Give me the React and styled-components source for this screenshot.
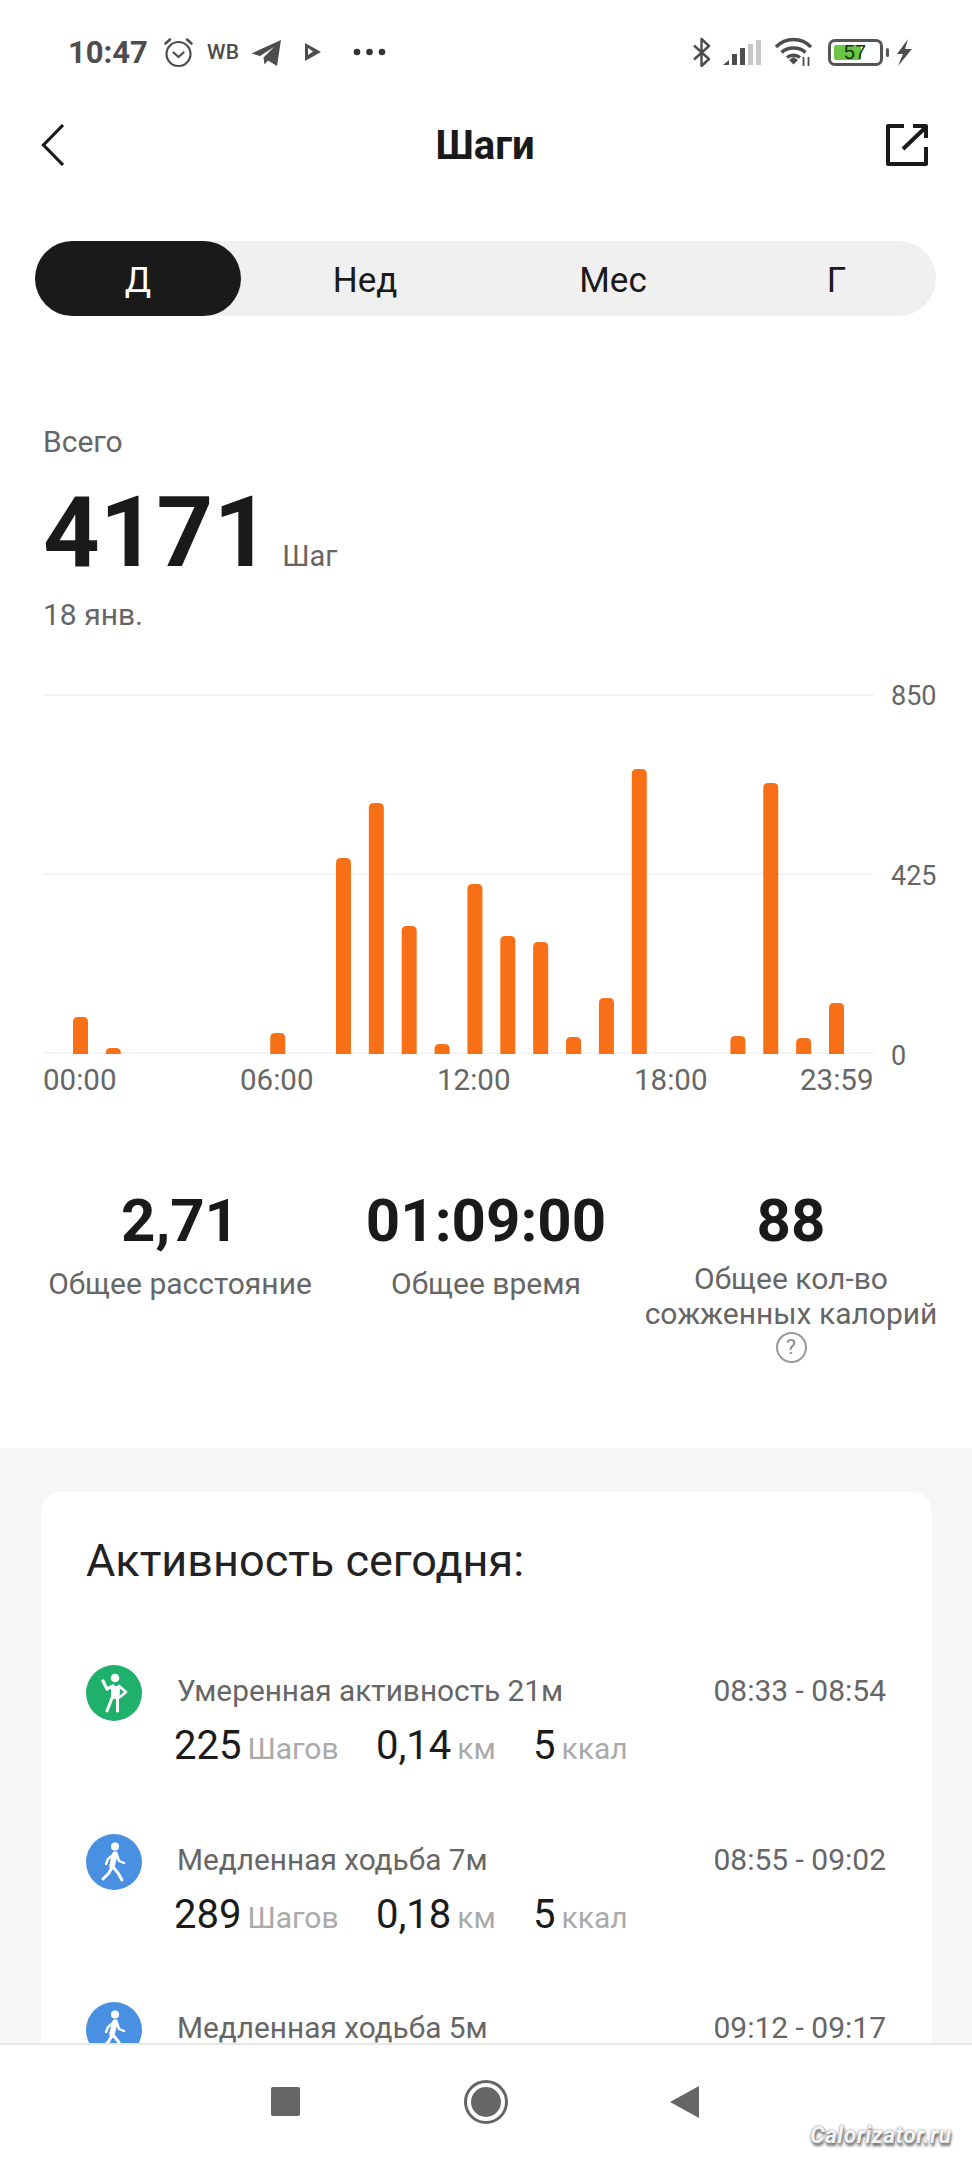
import React from "react";
import styled, { createGlobalStyle } from "styled-components";

const Global = createGlobalStyle`
  html, body { margin: 0; padding: 0; background: #fff; }
  * { box-sizing: border-box; }
  body { font-family: Roboto, "Noto Sans", sans-serif; color: #1a1a1a; }
`;
const Page = styled.div`
  position: relative; width: 972px; height: 2160px; display: flex; flex-direction: column;
  overflow: hidden; background: #fff;
`;
const Status = styled.div`
  height: 104px; flex: none; display: flex; align-items: center; justify-content: space-between;
  padding: 0 60px 0 68px; color: #4d4d4d;
`;
const StatusGroup = styled.div`display: flex; align-items: center;`;
const Time = styled.span`font-size: 31px; font-weight: 700; line-height: 1;`;
const StatusItem = styled.span`display: flex; align-items: center; margin-left: ${p => p.$gap}px;`;
const Wb = styled.span`font-size: 21px; font-weight: 500; letter-spacing: .3px;`;
const Battery = styled.span`
  position: relative; width: 55px; height: 27px; border: 3px solid #555; border-radius: 7px; display: block; margin-right: 12px;
  &::after { content: ""; position: absolute; right: -9px; top: 6px; width: 3px; height: 9px; background: #555; border-radius: 2px; }
`;
const BatteryFill = styled.span`position: absolute; left: 3px; top: 3px; bottom: 3px; border-radius: 2px; background: #6cc644;`;
const BatteryText = styled.span`
  position: absolute; left: 13px; top: 0; line-height: 21px; font-family: "Liberation Sans", sans-serif; font-size: 20px; color: #16331a;
`;
const Header = styled.div`height: 82px; flex: none; display: grid; grid-template-columns: 1fr auto 1fr; align-items: center; padding: 0 43px 0 41px;`;
const IconBtn = styled.span`display: flex; justify-content: ${p => p.$end ? "flex-end" : "flex-start"};`;
const Title = styled.h1`margin: 2px 0 0; font-size: 40px; font-weight: 700; line-height: 1;`;
const Segmented = styled.div`
  margin: 55px 36px 0 35px; height: 75px; flex: none; background: #f0f0f0; border-radius: 38px;
  display: grid; grid-template-columns: 206px 248px 248px 199px;
`;
const Segment = styled.div`
  display: flex; align-items: center; justify-content: center; font-size: 35px; padding-top: 3px;
  border-radius: 38px;
  color: ${p => p.$active ? "#fff" : "#1a1a1a"}; background: ${p => p.$active ? "#1a1a1a" : "transparent"};
`;
const Summary = styled.div`padding: 108px 0 0 43px; flex: none;`;
const Muted = styled.div`font-size: 30px; line-height: 36px; color: #666;`;
const TotalRow = styled.div`display: flex; align-items: baseline; margin: 22px 0 15px;`;
const Total = styled.span`font-size: 99px; font-weight: 700; line-height: 100px;`;
const TotalUnit = styled.span`margin-left: 12px; font-size: 29px; color: #666;`;
const Chart = styled.div`margin: 61px 0 0 43px; flex: none; display: grid; grid-template-columns: 831px auto; column-gap: 17px;`;
const Plot = styled.svg`display: block; width: 831px; height: 360px;`;
const YAxis = styled.div`
  height: 396px; margin: -16px 0 -20px; display: flex; flex-direction: column; justify-content: space-between;
  font-size: 27px; line-height: 36px; color: #666;
`;
const XAxis = styled.div`
  margin-top: 8px; display: grid; grid-template-columns: 197px 197px 197px 166px 74px;
  font-size: 29.5px; line-height: 36px; color: #666; white-space: nowrap;
`;
const Stats = styled.div`
  margin-top: 88px; padding-left: 33px; flex: none; display: grid; grid-template-columns: 294px 318px 292px; text-align: center; height: 262px;
`;
const Stat = styled.div`display: flex; flex-direction: column; align-items: center;`;
const StatValue = styled.div`font-size: 60px; font-weight: 700; line-height: 70px;`;
const StatLabel = styled.div`margin-top: ${p => p.$top}px; font-size: 30px; line-height: 35px; color: #666; white-space: nowrap;`;
const Help = styled.span`
  width: 31px; height: 31px; margin-top: 1px; border: 2.5px solid #999; border-radius: 50%; display: flex; align-items: center; justify-content: center;
  font-size: 21px; line-height: 1; color: #888;
`;
const Lower = styled.div`flex: 1; min-height: 0; background: #f6f6f6; padding: 44px 40px 0 41px; overflow: hidden;`;
const Card = styled.div`background: #fff; border-radius: 20px 20px 0 0; padding: 39px 46px 0 45px; height: 700px;`;
const CardTitle = styled.div`font-size: 45px; line-height: 60px; margin-bottom: 74px; color: #222;`;
const Row = styled.div`height: 168.5px; display: grid; grid-template-columns: 91px 1fr auto; grid-template-rows: 36px auto; align-content: start;`;
const Badge = styled.svg`width: 56px; height: 56px; grid-row: 1 / span 2; display: block;`;
const RowTitle = styled.div`margin-top: 12px; font-size: 29.8px; line-height: 28px; color: #666; white-space: nowrap;`;
const RowTime = styled.div`margin-top: 12px; font-size: 30px; line-height: 28px; color: #666; white-space: nowrap;`;
const Metrics = styled.div`grid-column: 2 / span 2; margin: 21px 0 0 -3px; display: grid; grid-template-columns: 202px 157px auto;`;
const Metric = styled.div`display: flex; align-items: baseline; gap: 6px; white-space: nowrap;`;
const MetricValue = styled.span`font-size: 40px; line-height: 48px; color: #1a1a1a;`;
const MetricUnit = styled.span`font-size: 30px; color: #aaa;`;
const BottomNav = styled.div`
  flex: none; height: 117px; background: #fff; border-top: 2px solid #e8e8e8; padding: 0 3px 2px 0; display: flex; align-items: center; justify-content: center; gap: 164px;
`;
const Square = styled.span`width: 29px; height: 29px; background: #666; border-radius: 2px;`;
const Home = styled.span`
  width: 44px; height: 44px; border: 3px solid #666; border-radius: 50%; padding: 4px; display: block;
  &::after { content: ""; display: block; width: 100%; height: 100%; background: #666; border-radius: 50%; }
`;
const BackTriangle = styled.svg`width: 29px; height: 32px; margin-left: -2px; display: block;`;
const Watermark = styled.div`
  position: absolute; left: 810px; top: 2122px; font-size: 23px; font-weight: 700; font-style: italic; letter-spacing: .4px; line-height: 28px;
  color: #f4f4f4; text-shadow: 0 0 2px #666, 1px 3px 3px #666;
`;

const hours = { 0: 37, 1: 6, 6: 21, 8: 196, 9: 251, 10: 128, 11: 10, 12: 170, 13: 118, 14: 112, 15: 17, 16: 56, 17: 285, 20: 18, 21: 271, 22: 16, 23: 51 };

const Person = ({ kind }) => kind === "green" ? (
  <Badge viewBox="0 0 56 56">
    <circle cx="28" cy="28" r="28" fill="#1fb16c" />
    <circle cx="29" cy="13" r="4.3" fill="#fff" />
    <g fill="none" stroke="#fff" strokeLinecap="round" strokeLinejoin="round">
      <polyline points="17,16 21,24 27,21" strokeWidth="3.2" />
      <polyline points="33,21 40,27 34,32" strokeWidth="2.8" />
      <path d="M26 22 L33 22 L32.5 33 L26 33 Z" fill="#fff" strokeWidth="2" />
      <path d="M26 33 L21 46 M31.5 33 L31.5 46" strokeWidth="3" />
    </g>
  </Badge>
) : (
  <Badge viewBox="0 0 56 56">
    <circle cx="28" cy="28" r="28" fill="#4a90e2" />
    <circle cx="29" cy="12.5" r="4" fill="#fff" />
    <g fill="none" stroke="#fff" strokeLinecap="round" strokeLinejoin="round">
      <path d="M29 20 L26 32" strokeWidth="5.5" />
      <path d="M27 21 L22 25 L20 30 M31 21 L33 27 L38 29" strokeWidth="2.4" />
      <path d="M26 33 L23 39 L17 45 M27 33 L32 39 L36 46" strokeWidth="3" />
    </g>
  </Badge>
);

const activities = [
  { kind: "green", title: "Умеренная активность 21м", time: "08:33 - 08:54", steps: "225", km: "0,14", kcal: "5" },
  { kind: "blue", title: "Медленная ходьба 7м", time: "08:55 - 09:02", steps: "289", km: "0,18", kcal: "5" },
  { kind: "blue", title: "Медленная ходьба 5м", time: "09:12 - 09:17" },
];

export default function App() {
  return (
    <Page>
      <Global />
      <Status>
        <StatusGroup>
          <Time>10:47</Time>
          <StatusItem $gap={15}>
            <svg width="31" height="31" viewBox="0 0 31 31" fill="none" stroke="#4d4d4d" strokeWidth="2.2" strokeLinecap="round" strokeLinejoin="round">
              <circle cx="15.5" cy="17" r="12" />
              <path d="M10.5 15.5 L15.5 20 L20.5 15.5" />
              <path d="M2.5 6.5 L7 2.5 M28.5 6.5 L24 2.5" strokeWidth="2.6" />
            </svg>
          </StatusItem>
          <StatusItem $gap={13}><Wb>WB</Wb></StatusItem>
          <StatusItem $gap={12}>
            <svg width="31" height="27" viewBox="0 0 31 27"><path fill="#4d4d4d" d="M0.5 14.5 L30 1 L26 27 L17 21.5 L13.5 25.5 L12.5 18.5 L23 8 L9 17 Z" /></svg>
          </StatusItem>
          <StatusItem $gap={23}>
            <svg width="16" height="18" viewBox="0 0 16 18"><path fill="#4d4d4d" d="M0 0 L16 9 L0 18 Z" /><path fill="#fff" d="M3 5 L8 8.5 L3 12 Z" /></svg>
          </StatusItem>
          <StatusItem $gap={32}>
            <svg width="33" height="8" viewBox="0 0 33 8" fill="#333"><circle cx="4" cy="4" r="3.3" /><circle cx="16.5" cy="4" r="3.3" /><circle cx="29" cy="4" r="3.3" /></svg>
          </StatusItem>
        </StatusGroup>
        <StatusGroup>
          <svg width="20" height="31" viewBox="0 0 20 31" fill="none" stroke="#4d4d4d" strokeWidth="2.4" strokeLinejoin="round"><path d="M2 8.5 L17 22 L9.5 29 L9.5 2 L17 9 L2 22.5" /></svg>
          <StatusItem $gap={11}>
            <svg width="38" height="27" viewBox="0 0 38 27">
              <path fill="#4d4d4d" d="M0 26 L6 21 L6 26 Z" />
              <rect x="9" y="15" width="5" height="11" fill="#4d4d4d" />
              <rect x="17" y="9" width="5" height="17" fill="#4d4d4d" />
              <rect x="25" y="5" width="5" height="21" fill="#c8c8c8" />
              <rect x="33" y="1" width="5" height="25" fill="#c8c8c8" />
            </svg>
          </StatusItem>
          <StatusItem $gap={13}>
            <svg width="39" height="30" viewBox="0 0 38 30" fill="none" stroke="#4d4d4d" strokeWidth="3.4">
              <path d="M1.5 10 C11 0 27 0 36.5 10" />
              <path d="M7 15.5 C13 9.5 25 9.5 31 15.5" />
              <path d="M12.5 20.5 C16 17.5 22 17.5 25.5 20.5" />
              <path d="M14.5 23 L19 27.5 L23.5 23 L19 20 Z" fill="#4d4d4d" stroke="none" />
              <path d="M29 20 V29 M34 20 V29" strokeWidth="1.8" />
            </svg>
          </StatusItem>
          <StatusItem $gap={15}>
            <Battery>
              <BatteryFill style={{ width: "27px" }} />
              <BatteryText>57</BatteryText>
            </Battery>
          </StatusItem>
          <svg width="17" height="27" viewBox="0 0 17 27"><path fill="#4d4d4d" d="M13 0 L2 15 L8 15 L3 27 L17 10 L10 10 Z" /></svg>
        </StatusGroup>
      </Status>
      <Header>
        <IconBtn>
          <svg width="24" height="44" viewBox="0 0 24 44" fill="none" stroke="#1a1a1a" strokeWidth="3.2"><path d="M22 2 L2.5 22 L22 42" /></svg>
        </IconBtn>
        <Title>Шаги</Title>
        <IconBtn $end>
          <svg width="44" height="44" viewBox="0 0 44 44" fill="none" stroke="#1a1a1a" strokeWidth="4" strokeLinejoin="round">
            <path d="M19 3 H3 V41 H41 V24" />
            <path d="M18 26 L41 4 M28 3 H41 V15" />
          </svg>
        </IconBtn>
      </Header>
      <Segmented>
        <Segment $active>Д</Segment>
        <Segment>Нед</Segment>
        <Segment>Мес</Segment>
        <Segment>Г</Segment>
      </Segmented>
      <Summary>
        <Muted>Всего</Muted>
        <TotalRow><Total>4171</Total><TotalUnit>Шаг</TotalUnit></TotalRow>
        <Muted>18 янв.</Muted>
      </Summary>
      <Chart>
        <Plot viewBox="0 0 831 360">
          {[1, 180, 360 - 1].map(y => <rect key={y} x="0" y={y - 1} width="831" height="2" fill="#f5f5f5" />)}
          {Object.entries(hours).map(([h, v]) => (
            <path key={h} fill="#f76f16" d={`M${30 + h * 32.87} 360 V${360 - v + 5} q0 -5 5 -5 h5 q5 0 5 5 V360 Z`} />
          ))}
        </Plot>
        <YAxis><span>850</span><span>425</span><span>0</span></YAxis>
        <XAxis><span>00:00</span><span>06:00</span><span>12:00</span><span>18:00</span><span>23:59</span></XAxis>
      </Chart>
      <Stats>
        <Stat><StatValue>2,71</StatValue><StatLabel $top={10}>Общее расстояние</StatLabel></Stat>
        <Stat><StatValue>01:09:00</StatValue><StatLabel $top={10}>Общее время</StatLabel></Stat>
        <Stat><StatValue>88</StatValue><StatLabel $top={5}>Общее кол-во<br />сожженных калорий</StatLabel><Help>?</Help></Stat>
      </Stats>
      <Lower>
        <Card>
          <CardTitle>Активность сегодня:</CardTitle>
          {activities.map(a => (
            <Row key={a.title}>
              <Person kind={a.kind} />
              <RowTitle>{a.title}</RowTitle>
              <RowTime>{a.time}</RowTime>
              {a.steps && (
                <Metrics>
                  <Metric><MetricValue>{a.steps}</MetricValue><MetricUnit>Шагов</MetricUnit></Metric>
                  <Metric><MetricValue>{a.km}</MetricValue><MetricUnit>км</MetricUnit></Metric>
                  <Metric><MetricValue>{a.kcal}</MetricValue><MetricUnit>ккал</MetricUnit></Metric>
                </Metrics>
              )}
            </Row>
          ))}
        </Card>
      </Lower>
      <BottomNav>
        <Square />
        <Home />
        <BackTriangle viewBox="0 0 29 32"><path fill="#666" d="M29 0 V32 L0 16 Z" /></BackTriangle>
      </BottomNav>
      <Watermark>Calorizator.ru</Watermark>
    </Page>
  );
}
